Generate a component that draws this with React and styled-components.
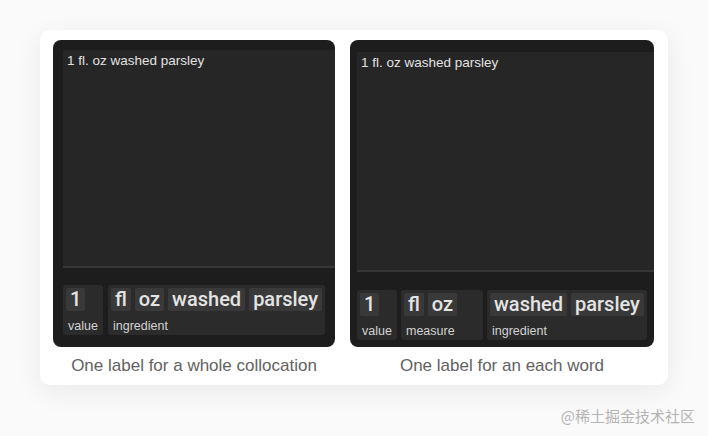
import React from "react";
import styled, { createGlobalStyle } from "styled-components";

const GlobalStyle = createGlobalStyle`
  html, body {
    margin: 0;
    padding: 0;
    background: #fafafa;
    font-family: "Liberation Sans", Arial, sans-serif;
  }
`;

const Page = styled.div`
  width: 708px;
  height: 436px;
  padding: 30px 0 0 40px;
  box-sizing: border-box;
`;

const Card = styled.div`
  width: 628px;
  height: 355px;
  box-sizing: border-box;
  padding: 10px 14px 0 13px;
  background: #fff;
  border-radius: 10px;
  box-shadow: 0 6px 28px rgba(0, 0, 0, 0.07);
  display: flex;
  gap: 15px;
`;

const Column = styled.div`
  display: flex;
  flex-direction: column;
  align-items: center;
`;

const Panel = styled.div`
  width: ${(p) => p.$width}px;
  height: 307px;
  box-sizing: border-box;
  padding: ${(p) => p.$top}px 0 0 ${(p) => p.$left}px;
  background: #1d1d1d;
  border-radius: 8px;
  display: flex;
  flex-direction: column;
  overflow: hidden;
`;

const Editor = styled.div`
  height: ${(p) => p.$height}px;
  box-sizing: border-box;
  background: #262626;
  border-bottom: 2px solid #363636;
  padding: 3px 4px;
  font-size: 13.5px;
  line-height: 16px;
  color: #e2e2e2;
`;

const LabelRow = styled.div`
  margin-top: ${(p) => p.$gap}px;
  display: flex;
  gap: ${(p) => p.$spacing}px;
`;

const Group = styled.div`
  min-width: ${(p) => p.$minWidth || 0}px;
  box-sizing: border-box;
  height: 50px;
  padding: 3px 3px 0;
  background: #2b2b2b;
  border-radius: 3px;
  display: flex;
  flex-direction: column;
`;

const Tokens = styled.div`
  display: flex;
  gap: 4px;
`;

const Token = styled.span`
  height: 23px;
  line-height: 23px;
  padding: 0 4px;
  background: #393939;
  border-radius: 2px;
  font-family: Roboto, "Liberation Sans", sans-serif;
  font-weight: 500;
  font-size: 20px;
  color: #e4e4e4;
`;

const GroupLabel = styled.span`
  padding: 8px 2px 0;
  font-size: 12.5px;
  line-height: 14px;
  color: #d2d2d2;
`;

const Caption = styled.div`
  margin-top: 9px;
  font-size: 17px;
  line-height: 20px;
  color: #626262;
`;

const Watermark = styled.div`
  width: 655px;
  margin-top: 20px;
  text-align: right;
  font-family: "Noto Sans CJK SC", "Liberation Sans", sans-serif;
  font-size: 15px;
  color: #b4b4b4;
`;

const sentence = "1 fl. oz washed parsley";

const examples = [
  {
    width: 282,
    top: 10,
    left: 10,
    editor: 218,
    gap: 17,
    spacing: 5,
    caption: "One label for a whole collocation",
    groups: [
      { label: "value", words: ["1"], minWidth: 40 },
      { label: "ingredient", words: ["fl", "oz", "washed", "parsley"] },
    ],
  },
  {
    width: 304,
    top: 12,
    left: 7,
    editor: 220,
    gap: 18,
    spacing: 4,
    caption: "One label for an each word",
    groups: [
      { label: "value", words: ["1"], minWidth: 40 },
      { label: "measure", words: ["fl", "oz"], minWidth: 82 },
      { label: "ingredient", words: ["washed", "parsley"] },
    ],
  },
];

export default function App() {
  return (
    <>
      <GlobalStyle />
      <Page>
        <Card>
          {examples.map((ex) => (
            <Column key={ex.caption}>
              <Panel $width={ex.width} $top={ex.top} $left={ex.left}>
                <Editor $height={ex.editor}>{sentence}</Editor>
                <LabelRow $gap={ex.gap} $spacing={ex.spacing}>
                  {ex.groups.map((g) => (
                    <Group key={g.label} $minWidth={g.minWidth}>
                      <Tokens>
                        {g.words.map((w) => (
                          <Token key={w}>{w}</Token>
                        ))}
                      </Tokens>
                      <GroupLabel>{g.label}</GroupLabel>
                    </Group>
                  ))}
                </LabelRow>
              </Panel>
              <Caption>{ex.caption}</Caption>
            </Column>
          ))}
        </Card>
        <Watermark>@稀土掘金技术社区</Watermark>
      </Page>
    </>
  );
}
